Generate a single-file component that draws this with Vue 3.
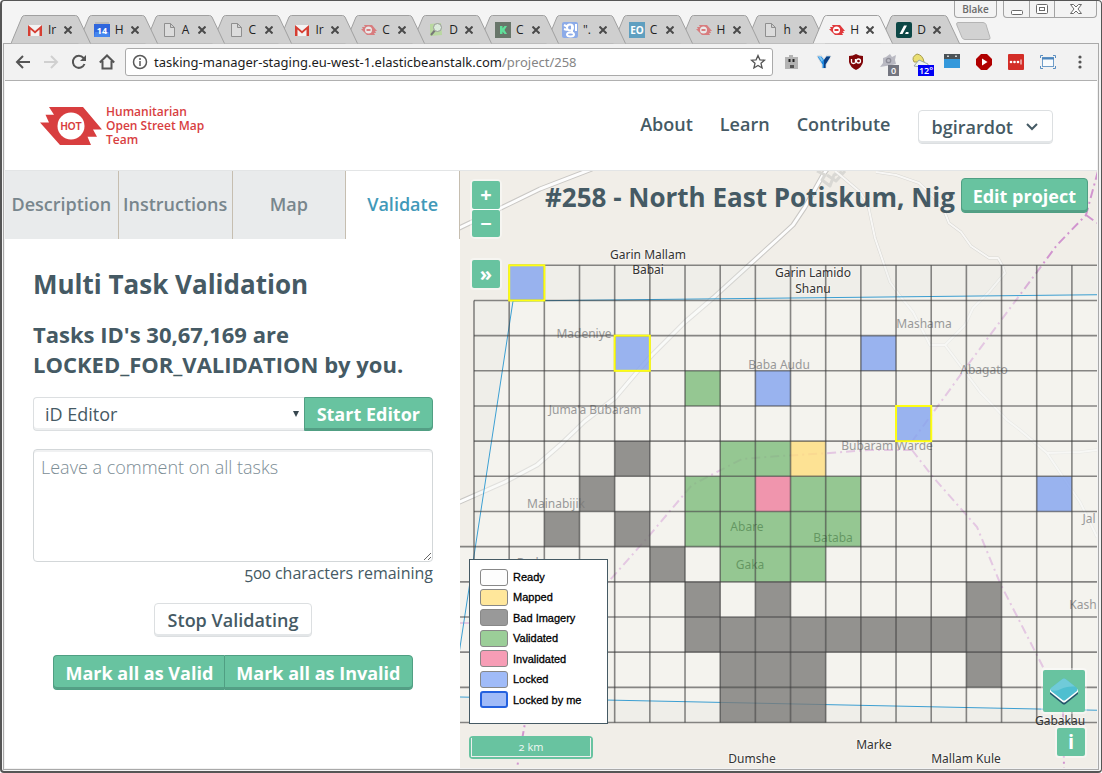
<script setup>
import { ref, computed } from 'vue'

const browserTabs = [
  { icon: 'gmail', title: 'Ir' },
  { icon: 'calendar', title: 'H' },
  { icon: 'doc', title: 'A' },
  { icon: 'doc', title: 'C' },
  { icon: 'gmail', title: 'Ir' },
  { icon: 'hot', title: 'C', faded: true },
  { icon: 'osm', title: 'D' },
  { icon: 'k', title: 'C' },
  { icon: 'google', title: '".' },
  { icon: 'eo', title: 'C' },
  { icon: 'hot', title: 'H', faded: true },
  { icon: 'doc', title: 'h' },
  { icon: 'hot', title: 'H', active: true },
  { icon: 'slash', title: 'D' }
]

const extensions = ['face', 'vimium', 'ublock', 'cat', 'weather', 'window', 'play', 'lastpass', 'capture']

const sideTabs = ['Description', 'Instructions', 'Map', 'Validate']
const activeTab = ref('Validate')

const comment = ref('')
const remaining = computed(() => 500 - comment.value.length)

const legend = [
  { label: 'Ready', kind: 'ready' },
  { label: 'Mapped', kind: 'mapped' },
  { label: 'Bad Imagery', kind: 'bad' },
  { label: 'Validated', kind: 'validated' },
  { label: 'Invalidated', kind: 'invalidated' },
  { label: 'Locked', kind: 'locked' },
  { label: 'Locked by me', kind: 'mine' }
]

const originX = 474
const originY = 265.3
const step = 35.17
const colX = (c) => originX + c * step
const rowY = (r) => originY + r * step

const cellsByKind = {
  validated: [[6, 3], [7, 5], [8, 5], [6, 6], [7, 6], [9, 6], [10, 6], [6, 7], [7, 7], [8, 7], [9, 7], [10, 7], [7, 8], [8, 8], [9, 8]],
  mapped: [[9, 5]],
  invalidated: [[8, 6]],
  locked: [[11, 2], [8, 3], [16, 6], [1, 0], [4, 2], [12, 4]],
  bad: [
    [4, 5], [3, 6], [2, 7], [4, 7], [5, 8], [6, 9], [8, 9], [14, 9],
    [6, 10], [7, 10], [8, 10], [9, 10], [10, 10], [11, 10], [12, 10], [13, 10], [14, 10],
    [7, 11], [8, 11], [9, 11], [14, 11], [7, 12], [8, 12], [9, 12]
  ]
}
const cells = Object.entries(cellsByKind).flatMap(([kind, list]) => list.map(([c, r]) => ({ kind, c, r })))
const selected = [[1, 0], [4, 2], [12, 4]]

const columns = Array.from({ length: 18 }, (_, i) => i)
const rows = Array.from({ length: 14 }, (_, i) => i)
const rowStart = (r) => (r === 0 ? colX(1) : r < 8 ? colX(0) : 460)

const mainRoads = [
  'M455 230L503 207 540 189 592 169',
  'M455 504L505 482 537 465 560 445 585 421 615 398 637 372 652 355 685 322 713 298 780 237 793 225 805 207 823 175 828 168'
]
const minorRoads = [
  'M835 171l5 4 20 17 8 13 7 33 15 44 10 14 13 16 17 33 15 0 20-20 8-17 16-16 16-19-3-8-4-7-9 0-18-12-10-14-12-9-4-10-12-17-14-13-23-8-20-3',
  'M945 345l15 20 20 27 27 28 13 10 27 23 16 24 17 25 17 35M1047 453l33-1 17-2'
]

const places = [
  { name: 'Madeniye', x: 584, y: 338 },
  { name: 'Baba Audu', x: 779, y: 369 },
  { name: 'Mashama', x: 924, y: 328 },
  { name: 'Abagato', x: 984, y: 374 },
  { name: "Juma'a Bubaram", x: 595, y: 414 },
  { name: 'Bubaram Warde', x: 887, y: 450 },
  { name: 'Mainabijik', x: 556, y: 508 },
  { name: 'Abare', x: 747, y: 531, shaded: true },
  { name: 'Bataba', x: 833, y: 542, shaded: true },
  { name: 'Gaka', x: 750, y: 569, shaded: true },
  { name: 'Bada', x: 531, y: 567 },
  { name: 'Jal', x: 1089, y: 523 },
  { name: 'Kash', x: 1083, y: 609 },
  { name: 'Garin Mallam', x: 648, y: 259, dark: true },
  { name: 'Babai', x: 648, y: 274, dark: true },
  { name: 'Garin Lamido', x: 813, y: 277, dark: true },
  { name: 'Shanu', x: 813, y: 293, dark: true },
  { name: 'Gabakau', x: 1060, y: 725, dark: true },
  { name: 'Marke', x: 874, y: 749, dark: true },
  { name: 'Dumshe', x: 752, y: 763, dark: true },
  { name: 'Mallam Kule', x: 966, y: 763, dark: true }
]
</script>

<template>
  <div class="window">
    <div class="titlebar">
      <div class="tabstrip">
        <div
          v-for="(tab, i) in browserTabs"
          :key="i"
          class="btab"
          :class="{ current: tab.active }"
          :style="{ zIndex: tab.active ? 30 : 20 - i }"
        >
          <svg class="tab-shape" width="80" height="29" viewBox="0 0 80 29">
            <path d="M0 28.500 L11 2 Q12 .5 13.500 .5 H64.500 Q66 .5 67 2 L79.500 28.500" />
          </svg>
          <svg class="favicon" :class="{ faded: tab.faded }" width="16" height="16" viewBox="0 0 16 16">
            <g v-if="tab.icon === 'gmail'">
              <path d="M1 3h14v11H1z" fill="#f3f3f3" />
              <path d="M1 14V3l7 6 7-6v11h-2.500V7.500L8 11.500 3.500 7.500V14z" fill="#d63e32" />
            </g>
            <g v-else-if="tab.icon === 'calendar'">
              <path d="M1 0h14v3H1z" fill="#bcbcbc" />
              <path d="M0 2h16v13H0z" fill="#2f66dd" />
              <path d="M1 10h14l1 5H0z" fill="#4485ee" />
              <text x="8" y="12" text-anchor="middle" class="fav-text" font-size="9">14</text>
            </g>
            <path v-else-if="tab.icon === 'doc'" d="M3.500 1.500h6l4 4v9h-10zM9.500 1.500v4h4" fill="#dcdcdc" stroke="#8f8f8f" />
            <g v-else-if="tab.icon === 'hot'">
              <path d="M3 3h8l5 6h-2l1 2h-2l1 2H6L0 7h2L1 5h3z" fill="#e0393c" />
              <circle cx="7.500" cy="8" r="3.500" fill="#fff" />
              <path d="M5.500 8h4" stroke="#e0393c" stroke-width="2" />
            </g>
            <g v-else-if="tab.icon === 'osm'">
              <path d="M2 2l11-1 1 12-12 1z" fill="#b9d8a0" />
              <path d="M3 13l5-6" stroke="#777" stroke-width="2" />
              <circle cx="9.500" cy="5.500" r="4" fill="#dcebdc" stroke="#999" />
            </g>
            <g v-else-if="tab.icon === 'k'">
              <path d="M0 0h16v16H0z" fill="#68766a" />
              <path d="M5 4v8h2.500V9.500L9.500 12H12L9.500 8 12 4H9.500L7.500 6.500V4z" fill="#5fe09a" />
            </g>
            <g v-else-if="tab.icon === 'google'">
              <rect width="16" height="16" rx="2" fill="#8cabe8" />
              <circle cx="8" cy="5.500" r="3" fill="none" stroke="#fff" stroke-width="2" />
              <ellipse cx="8.500" cy="12.500" rx="3.500" ry="2" fill="none" stroke="#fff" stroke-width="2" />
              <path d="M10 3v7M14 2v7M2 3l4 2M2 7l3 1" stroke="#fff" stroke-width="2" />
            </g>
            <g v-else-if="tab.icon === 'eo'">
              <path d="M0 0h16v16H0z" fill="#5f9fc0" />
              <text x="8" y="12" text-anchor="middle" class="fav-text" font-size="10">EO</text>
            </g>
            <g v-else>
              <rect width="16" height="16" rx="2" fill="#0c4746" />
              <path d="M8 3.500h3L6.500 12h-3zM10 10h2.500v2H9z" fill="#fff" />
            </g>
          </svg>
          <span class="tab-title">{{ tab.title }}</span>
          <svg class="tab-close" width="8" height="8" viewBox="0 0 8 8"><path d="M.5 .5l7 7M7.500 .5l-7 7" /></svg>
        </div>
      </div>
      <svg class="new-tab" width="35" height="18" viewBox="0 0 35 18">
        <path d="M2 .5h25q2 0 3 2l4 13q.5 2-2 2H9q-2 0-3-2L.8 3Q0 .5 2 .5z" fill="#d2d2d2" stroke="#b4b4b4" />
      </svg>
      <div class="win-controls">
        <button class="profile" type="button">Blake</button>
        <div class="win-buttons">
          <button type="button" aria-label="Minimize">
            <svg width="14" height="14" viewBox="0 0 14 14"><rect x="1.500" y="8.500" width="11" height="4" rx="1" /></svg>
          </button>
          <button type="button" aria-label="Maximize">
            <svg width="14" height="14" viewBox="0 0 14 14"><rect x="1.500" y="2.500" width="11" height="9" rx="1" /><rect x="4.500" y="5.500" width="5" height="3" /></svg>
          </button>
          <button type="button" class="close" aria-label="Close">
            <svg width="14" height="14" viewBox="0 0 14 14"><path d="M1.500 2.500h3L7 5l2.500-2.500h3L9 7l3.500 4.500h-3L7 9l-2.500 2.500h-3L5 7z" /></svg>
          </button>
        </div>
      </div>
    </div>

    <div class="client">
      <div class="toolbar">
        <div class="nav-buttons">
          <button type="button" aria-label="Back"><svg width="16" height="16" viewBox="0 0 16 16"><path d="M15 8H2M8 2L2 8l6 6" /></svg></button>
          <button type="button" aria-label="Forward" class="off"><svg width="16" height="16" viewBox="0 0 16 16"><path d="M1 8h13M8 2l6 6-6 6" /></svg></button>
          <button type="button" aria-label="Reload"><svg width="16" height="16" viewBox="0 0 16 16"><path d="M13.500 10A6 6 0 1 1 12.500 4L14 5.500" /><path d="M15 1v6H9z" class="solid" /></svg></button>
          <button type="button" aria-label="Home"><svg width="16" height="16" viewBox="0 0 16 16"><path d="M.8 8.500L8 1.500l7.200 7M3.500 7v7.500h9V7" /></svg></button>
        </div>
        <div class="address">
          <svg width="16" height="16" viewBox="0 0 16 16" class="info-icon"><circle cx="8" cy="8" r="6.500" /><path d="M8 7v5M8 4v2" /></svg>
          <div class="url">tasking-manager-staging.eu-west-1.elasticbeanstalk.com<span>/project/258</span></div>
          <svg width="16" height="16" viewBox="0 0 16 16" class="star"><path d="M8 1.500l1.900 4.300 4.600.4-3.500 3.100 1.100 4.700L8 11.500 3.900 14 5 9.300 1.500 6.200l4.600-.4z" /></svg>
        </div>
        <div class="extensions">
          <svg v-for="name in extensions" :key="name" width="16" height="16" viewBox="0 0 16 16">
            <g v-if="name === 'face'">
              <path d="M1 3h4V1h4v2h5v12H1z" fill="#b3b3b3" />
              <path d="M5.500 5v3M9.500 5v3" stroke="#222" stroke-width="2" />
              <path d="M6 11h4v3H6z" fill="#555" />
            </g>
            <g v-else-if="name === 'vimium'">
              <path d="M1 2l4-1 3 4 3-4 4 1-5 9v3H6v-3z" fill="#fff" stroke="#ddd" />
              <path d="M1.500 2.500l4 0L8 6l2.500-3.500 4 0-5 8v3.500h-3v-3.500z" fill="#1c86dc" />
              <path d="M8 6l2.500-3.500 4 0-5 8v3.500H8z" fill="#0d3f82" />
              <path d="M2.500 3h2.500l2 3-1 2z" fill="#7cc6f5" />
            </g>
            <g v-else-if="name === 'ublock'">
              <path d="M8 0q3 2 7 2v6q-1 5-7 8-6-3-7-8V2q4 0 7-2z" fill="#800609" />
              <path d="M3.500 5v3q0 1.500 2 1.500t2-1.500V5" fill="none" stroke="#fff" stroke-width="1.300" />
              <circle cx="10.500" cy="7" r="2" fill="none" stroke="#fff" stroke-width="1.300" />
            </g>
            <g v-else-if="name === 'cat'">
              <path d="M3 4l3-1 4-3 2 3 4-2-1 5 1 4-4 1-12 2 3-4z" fill="#b9b9c2" />
              <circle cx="8.500" cy="6.500" r="2.200" fill="none" stroke="#8d8d98" stroke-width="1.300" />
              <path d="M8 11h11v11H8z" fill="#73757f" />
              <text x="13.500" y="20" text-anchor="middle" class="badge-text" font-size="9">0</text>
            </g>
            <g v-else-if="name === 'weather'">
              <path d="M5 0q6 1 7 8H2Q-1 3 5 0z" fill="#eadf73" stroke="#a79d4f" />
              <path d="M2 12l5-6 9 4v4z" fill="#eef3ee" stroke="#9aa" />
              <path d="M6 11h16v11H6z" fill="#0000f5" />
              <text x="14" y="20" text-anchor="middle" class="badge-text" font-size="9">12°</text>
            </g>
            <g v-else-if="name === 'window'">
              <path d="M0 0h16v5H0z" fill="#4b5256" />
              <path d="M0 5h16v9H0z" fill="#3498db" />
              <path d="M4 1.500v1.500M12 1.500v1.500" stroke="#fff" stroke-width="1.500" />
            </g>
            <g v-else-if="name === 'play'">
              <path d="M5 0h6l5 5v6l-5 5H5l-5-5V5z" fill="#b00000" />
              <path d="M6 4.500v7L11.500 8z" fill="#fff" />
            </g>
            <g v-else-if="name === 'lastpass'">
              <rect width="16" height="16" rx="1" fill="#d32d27" />
              <circle cx="3" cy="8" r="1.300" fill="#fff" /><circle cx="6.500" cy="8" r="1.300" fill="#fff" /><circle cx="10" cy="8" r="1.300" fill="#fff" />
              <path d="M13 5.500v5" stroke="#fff" />
            </g>
            <g v-else>
              <rect x="2.500" y="3.500" width="11" height="9" fill="#f8fbfd" stroke="#6f9dc9" />
              <path d="M2 4.500h12" stroke="#4c86bd" stroke-width="2" />
              <path d="M.5 4V1.500H3M13 1.500h2.500V4M15.500 12v2.500H13M3 14.500H.5V12" fill="none" stroke="#5b8fc1" />
            </g>
          </svg>
          <button type="button" class="menu" aria-label="Menu">
            <svg width="16" height="16" viewBox="0 0 16 16"><circle cx="8" cy="3" r="1.600" /><circle cx="8" cy="8" r="1.600" /><circle cx="8" cy="13" r="1.600" /></svg>
          </button>
        </div>
      </div>

      <header class="page-header">
        <a href="#" class="logo">
          <svg width="62" height="38" viewBox="0 0 62 38">
            <path d="M9 0h34l19 22.500h-9l4 7.300h-9.500l3.500 8.200H20L0 15.500h9L5.500 7.700H14z" fill="#d83e3f" />
            <circle cx="31" cy="19" r="13.500" fill="#fff" />
            <text x="31" y="23" text-anchor="middle" class="logo-hot">HOT</text>
          </svg>
          <span>Humanitarian<br />Open Street Map<br />Team</span>
        </a>
        <nav>
          <a href="#">About</a>
          <a href="#">Learn</a>
          <a href="#">Contribute</a>
          <button type="button" class="btn light user">
            bgirardot
            <svg width="14" height="10" viewBox="0 0 14 10"><path d="M2 2l5 5 5-5" /></svg>
          </button>
        </nav>
      </header>

      <main>
        <section class="side">
          <div class="side-tabs">
            <button
              v-for="t in sideTabs"
              :key="t"
              type="button"
              :class="{ on: t === activeTab }"
              @click="activeTab = t"
            >{{ t }}</button>
          </div>
          <div class="panel">
            <h1>Multi Task Validation</h1>
            <h2>Tasks ID's 30,67,169 are LOCKED_FOR_VALIDATION by you.</h2>
            <div class="editor-row">
              <div class="select-wrap">
                <select aria-label="Editor"><option>iD Editor</option><option>JOSM</option></select>
                <svg width="6" height="6" viewBox="0 0 6 6"><path d="M0 0h6L3 6z" /></svg>
              </div>
              <button type="button" class="btn green start">Start Editor</button>
            </div>
            <textarea v-model="comment" aria-label="Comment" placeholder="Leave a comment on all tasks"></textarea>
            <p class="remaining">{{ remaining }} characters remaining</p>
            <div class="actions"><button type="button" class="btn light">Stop Validating</button></div>
            <div class="actions pair">
              <button type="button" class="btn green">Mark all as Valid</button>
              <button type="button" class="btn green">Mark all as Invalid</button>
            </div>
          </div>
        </section>

        <section class="map">
          <svg class="canvas" width="100%" height="100%">
            <g transform="translate(-460 -171)">
              <g class="roads">
                <path v-for="d in mainRoads" :key="'c' + d" :d="d" class="casing" />
                <path v-for="d in mainRoads" :key="'s' + d" :d="d" class="surface" />
                <path v-for="d in minorRoads" :key="'mc' + d" :d="d" class="minor-casing" />
                <path d="M817 171l8 4-3 5 8 6 4-11 8-3M845 171l-9 10-9-6" class="minor-casing" />
                <path v-for="d in minorRoads" :key="'m' + d" :d="d" class="minor" />
              </g>
              <g class="boundary">
                <path d="M1098 171L1086 215 1057 245 1037 272 970 362 913 440" />
                <path d="M1086 215L1097 223" />
                <path d="M912 450L933 477 977 527 1000 583 1042 665 1063 710 1064 768" />
                <path d="M912 450L870 450 830 453 780 456 742 459 692 485 648 537 610 580 550 640 525 723 517 768M460 623h12" />
              </g>
              <path :d="`M${colX(1)} ${rowY(0)}H2000V${rowY(13)}H460V${rowY(8)}H474V${rowY(1)}H${colX(1)}z`" class="veil" />
              <path :d="`M513 301L2000 288V729L460 697V${rowY(8)}H474z`" class="veil bright" />
              <g class="places">
                <text v-for="p in places" :key="p.name" :x="p.x" :y="p.y" :class="{ dark: p.dark, shaded: p.shaded }">{{ p.name }}</text>
              </g>
              <g class="aoi">
                <path d="M455 680L513 301 2000 285M460 697L2000 729" />
              </g>
              <rect
                v-for="(cell, i) in cells"
                :key="i"
                :x="colX(cell.c)"
                :y="rowY(cell.r)"
                :width="step"
                :height="step"
                class="cell"
                :class="cell.kind"
              />
              <g class="grid">
                <path v-for="c in columns" :key="'c' + c" :d="`M${colX(c)} ${rowY(c === 0 ? 1 : 0)}V${rowY(13)}`" />
                <path v-for="r in rows" :key="'r' + r" :d="`M${rowStart(r)} ${rowY(r)}H2000`" />
              </g>
              <rect
                v-for="([c, r], i) in selected"
                :key="'s' + i"
                :x="colX(c)"
                :y="rowY(r)"
                :width="step"
                :height="step"
                class="selected"
              />
            </g>
          </svg>

          <h2 class="map-title">#258 - North East Potiskum, Nig</h2>
          <button type="button" class="btn green edit">Edit project</button>

          <div class="zoom">
            <button type="button" aria-label="Zoom in">+</button>
            <button type="button" aria-label="Zoom out">−</button>
          </div>
          <button type="button" class="ctl expand" aria-label="Expand">»</button>

          <ul class="legend">
            <li v-for="item in legend" :key="item.label"><i :class="item.kind"></i>{{ item.label }}</li>
          </ul>
          <div class="scale"><div>2 km</div></div>

          <button type="button" class="ctl layers" aria-label="Layers">
            <svg width="30" height="30" viewBox="0 0 30 30">
              <path d="M1 15v3l12.500 10q1.500 1 3 0L29 18v-3z" fill="#23566b" />
              <path d="M1 13v3l12.500 10q1.500 1 3 0L29 16v-3z" fill="#fff" />
              <path d="M2 12L13.500 3q1.500-1 3 0L28 12q1.500 1.500 0 3L16.500 24q-1.500 1-3 0L2 15q-1.500-1.500 0-3z" fill="#4fbfd0" />
              <path d="M1.500 14Q1 13 2 12L13.500 3q1.500-1 3 0L26 10.500Q17 10 12 13T1.500 14z" fill="#70cbd9" />
            </svg>
          </button>
          <button type="button" class="ctl about" aria-label="Attributions">i</button>
        </section>
      </main>
    </div>
  </div>
</template>

<style>
body {
  margin: 0;
  background: #fff;
}
</style>

<style scoped>
* {
  box-sizing: border-box;
}
.window {
  display: flex;
  flex-direction: column;
  height: 100vh;
  border: 1px solid #555;
  border-width: 1px 1px 2px 2px;
  border-radius: 4px;
  background: #f4f4f4;
  font-family: "Open Sans", "Noto Sans", sans-serif;
  color: #455a64;
  overflow: hidden;
}
button {
  font: inherit;
  color: inherit;
  margin: 0;
  padding: 0;
  border: 0;
  background: none;
}
a {
  color: inherit;
  text-decoration: none;
}
svg {
  display: block;
  flex: none;
}

.titlebar {
  position: relative;
  flex: none;
  height: 42px;
  display: flex;
  align-items: flex-start;
  padding: 14px 0 0 9px;
}
.tabstrip {
  flex: 0 1 936px;
  display: flex;
}
.btab {
  position: relative;
  flex: 1;
  height: 29px;
  display: flex;
  align-items: center;
  padding-left: 16px;
}
.tab-shape {
  position: absolute;
  left: 0;
  top: 0;
}
.tab-shape path {
  fill: #cfcfcf;
  stroke: #a0a0a0;
}
.current .tab-shape path {
  fill: #f2f2f2;
}
.favicon {
  position: relative;
}
.favicon.faded {
  opacity: 0.55;
}
.fav-text {
  font-family: "Open Sans", sans-serif;
  font-weight: 700;
  fill: #fff;
}
.tab-title {
  position: relative;
  width: 9px;
  margin-left: 5px;
  white-space: nowrap;
  font-size: 12px;
  line-height: 16px;
  color: #222;
}
.tab-close {
  position: relative;
  margin-left: 7px;
}
.tab-close path {
  fill: none;
  stroke: #4a4a4a;
  stroke-width: 2;
}
.new-tab {
  margin: 7px 0 0 9px;
}
.win-controls {
  position: absolute;
  top: 0;
  right: 4px;
  display: flex;
  gap: 6px;
  z-index: 40;
}
.profile,
.win-buttons {
  height: 17px;
  border: 1px solid #a3a3a3;
  border-top: 0;
  border-radius: 0 0 4px 4px;
  background: #f3f3f3;
}
.profile {
  width: 43px;
  font-size: 10px;
  font-weight: 600;
  line-height: 16px;
  color: #6a6a6a;
}
.win-buttons {
  display: flex;
}
.win-buttons button {
  width: 25px;
  display: flex;
  justify-content: center;
  align-items: center;
}
.win-buttons button + button {
  border-left: 1px solid #a3a3a3;
}
.win-buttons .close {
  width: 42px;
}
.win-buttons rect,
.win-buttons path {
  fill: #fff;
  stroke: #6a6a6a;
}

.client {
  flex: 1;
  min-height: 0;
  display: flex;
  flex-direction: column;
  margin: 0 2px 1px 1px;
  padding: 0 1px 1px;
  border: 1px solid #a9a9a9;
  background: #f2f2f2;
}
.toolbar {
  flex: none;
  height: 37px;
  display: flex;
  align-items: center;
  padding: 0 9px 0 10px;
  border-bottom: 1px solid #b0b0b0;
}
.nav-buttons {
  display: flex;
  gap: 12px;
}
.nav-buttons path {
  fill: none;
  stroke: #555;
  stroke-width: 2;
}
.nav-buttons .solid {
  fill: #555;
  stroke: none;
}
.nav-buttons .off path {
  stroke: #d0d0d0;
}
.address {
  flex: 1;
  height: 28px;
  margin-left: 10px;
  padding: 0 6px;
  display: flex;
  align-items: center;
  border: 1px solid #aaa;
  border-radius: 3px;
  background: #fff;
}
.info-icon {
  fill: none;
  stroke: #5a5a5a;
  stroke-width: 1.500;
}
.url {
  flex: 1;
  margin-left: 6px;
  font-family: "Noto Sans", sans-serif;
  font-size: 13px;
  line-height: 20px;
  color: #1c1c1c;
  white-space: nowrap;
}
.url span {
  color: #858585;
}
.star {
  fill: none;
  stroke: #555;
  stroke-width: 1.300;
}
.extensions {
  display: flex;
  gap: 16px;
  margin-left: 11px;
}
.extensions svg {
  overflow: visible;
}
.badge-text {
  font-family: "Open Sans", sans-serif;
  font-weight: 600;
  fill: #fff;
}
.menu svg {
  fill: #555;
}

.page-header {
  flex: none;
  height: 90px;
  display: flex;
  align-items: center;
  justify-content: space-between;
  padding: 0 44px 0 35px;
  border-bottom: 1px solid #e3e5e6;
  background: #fff;
}
.logo {
  display: flex;
  align-items: center;
  gap: 4px;
  font-size: 12px;
  font-weight: 600;
  line-height: 14px;
  color: #d83e3f;
}
.logo-hot {
  font-family: "Liberation Sans Narrow", "Liberation Sans", sans-serif;
  font-size: 10px;
  font-weight: 700;
  fill: #d83e3f;
}
nav {
  display: flex;
  align-items: center;
  gap: 27px;
  padding-top: 2px;
  font-size: 18px;
  font-weight: 600;
  line-height: 24px;
}
nav a {
  padding-bottom: 6px;
}
.btn {
  height: 34px;
  padding: 0 12px;
  border: 1px solid #dcdfe1;
  border-radius: 4px;
  font-size: 18px;
  font-weight: 600;
  line-height: 30px;
  white-space: nowrap;
}
.light {
  padding: 0 13px;
  background: #fff;
  box-shadow: inset 0 -2px 0 #e3e6e8;
}
.green {
  background: #68c3a0;
  border-color: #509f83;
  box-shadow: inset 0 -2px 0 #549f85;
  color: #fff;
  font-weight: 700;
}
.user {
  display: flex;
  align-items: center;
  gap: 12px;
}
.user svg path {
  fill: none;
  stroke: #455a64;
  stroke-width: 2;
}

main {
  flex: 1;
  min-height: 0;
  display: flex;
  background: #fff;
}
.side {
  flex: 5 1 0;
  min-width: 0;
}
.side-tabs {
  display: grid;
  grid-template-columns: repeat(4, 1fr);
}
.side-tabs button {
  height: 68px;
  padding-bottom: 2px;
  border-right: 1px solid #c6beb0;
  background: #e9ebec;
  color: #78868d;
  font-size: 18px;
  font-weight: 600;
  white-space: nowrap;
}
.side-tabs .on {
  background: #fff;
  color: #4199b9;
}
.panel {
  padding: 27px 27px 0 28px;
}
h1 {
  margin: 0;
  font-size: 26px;
  font-weight: 700;
  line-height: 36px;
}
.panel h2 {
  margin: 17px 0 0;
  font-size: 22px;
  font-weight: 700;
  line-height: 30px;
}
.editor-row {
  display: flex;
  margin-top: 18px;
}
.select-wrap {
  position: relative;
  flex: 1;
}
.select-wrap svg {
  position: absolute;
  right: 5px;
  top: 14px;
  fill: #37474f;
}
select {
  appearance: none;
  width: 100%;
  height: 34px;
  padding: 0 11px;
  border: 1px solid #dcdfe1;
  border-right: 0;
  border-radius: 4px 0 0 4px;
  background: #fff;
  box-shadow: inset 0 -2px 0 #edeff0;
  font: 400 18px/30px "Open Sans", sans-serif;
  color: #455a64;
}
.start {
  border-radius: 0 4px 4px 0;
}
textarea {
  display: block;
  width: 100%;
  height: 113px;
  margin-top: 18px;
  padding: 5px 7px;
  border: 1px solid #d3d7d9;
  border-radius: 4px;
  background: #fff;
  box-shadow: inset 0 2px 0 #f0f1f2;
  font: 300 18px/25px "Open Sans", sans-serif;
  color: #455a64;
}
textarea::placeholder {
  color: #7c8d95;
}
.remaining {
  margin: 0;
  text-align: right;
  font-size: 16px;
  line-height: 23px;
  font-variant-numeric: oldstyle-nums;
}
.actions {
  display: flex;
  justify-content: center;
  margin-top: 18px;
}
.pair .btn {
  height: 35px;
  padding: 0 11px;
}
.pair .btn:first-child {
  border-radius: 4px 0 0 4px;
  border-right: 0;
}
.pair .btn:last-child {
  border-radius: 0 4px 4px 0;
}

.map {
  position: relative;
  flex: 7 1 0;
  min-width: 0;
  overflow: hidden;
  background: #f1eee8;
}
.canvas {
  position: absolute;
  inset: 0;
}
.roads path {
  fill: none;
  stroke-linejoin: round;
}
.roads .casing {
  stroke: #c9c7c4;
  stroke-width: 5;
}
.roads .surface {
  stroke: #fdfdfd;
  stroke-width: 3;
}
.roads .minor-casing {
  stroke: #d9d8d4;
  stroke-width: 3;
}
.roads .minor {
  stroke: #f8f7f5;
  stroke-width: 2;
}
.boundary path {
  fill: none;
  stroke: #d195cf;
  stroke-width: 2;
  stroke-dasharray: 9 4 2 4;
}
.veil {
  fill: #eaeeeb;
  opacity: 0.3;
}
.veil.bright {
  fill: #fffefd;
}
.aoi path {
  fill: none;
  stroke: #3c9fd2;
}
.places text {
  font-family: "Noto Sans", sans-serif;
  font-size: 12px;
  text-anchor: middle;
  fill: #999;
}
.places .dark {
  fill: #333;
  stroke: #f6f4f0;
  stroke-width: 2;
  paint-order: stroke;
}
.places .shaded {
  fill: #333;
}
.cell.validated {
  fill: rgba(118, 184, 115, 0.75);
}
.cell.mapped {
  fill: rgba(255, 221, 125, 0.8);
}
.cell.invalidated {
  fill: rgba(239, 125, 156, 0.8);
}
.cell.locked {
  fill: rgba(130, 163, 239, 0.8);
}
.cell.bad {
  fill: rgba(122, 121, 119, 0.8);
}
.grid path {
  stroke: rgba(60, 60, 60, 0.6);
  stroke-width: 1.600;
}
.selected {
  fill: none;
  stroke: #ff1;
  stroke-width: 2;
}

.map-title {
  position: absolute;
  top: 8px;
  left: 85px;
  right: 136px;
  margin: 0;
  font-size: 26px;
  font-weight: 700;
  line-height: 36px;
  white-space: nowrap;
}
.edit {
  position: absolute;
  top: 7px;
  right: 9px;
  height: 35px;
  padding: 0 11px;
}
.zoom {
  position: absolute;
  left: 12px;
  top: 10px;
  display: grid;
  gap: 1px;
  border-radius: 3px;
  background: #fff;
  box-shadow: 0 0 0 2px rgba(255, 255, 255, 0.4);
}
.zoom button,
.ctl {
  width: 28px;
  height: 28px;
  border-radius: 2px;
  background: #68c3a0;
  color: #fff;
  font-size: 20px;
  font-weight: 700;
  line-height: 28px;
}
.ctl {
  position: absolute;
  box-shadow: 0 0 0 2px rgba(255, 255, 255, 0.4);
}
.zoom button:last-child {
  height: 27px;
}
.expand {
  left: 12px;
  top: 89px;
}
.legend {
  position: absolute;
  left: 9px;
  bottom: 44px;
  width: 139px;
  margin: 0;
  padding: 7px 0 13px 10px;
  border: 1px solid #455a64;
  background: #fff;
  list-style: none;
  font-family: "Liberation Sans", sans-serif;
  font-size: 11px;
  line-height: 20px;
  color: #000;
  -webkit-text-stroke: 0.3px #000;
}
.legend li {
  display: flex;
  align-items: center;
  gap: 5px;
  height: 20px;
}
.legend li:nth-child(odd):not(:first-child) {
  height: 21px;
}
.legend i {
  width: 28px;
  height: 17px;
  border: 1px solid #888;
  border-radius: 3px;
}
.legend .ready {
  background: #fdfdfd;
}
.legend .mapped {
  background: #ffe79b;
}
.legend .bad {
  background: #999;
}
.legend .validated {
  background: #9bce98;
}
.legend .invalidated {
  background: #f79db6;
}
.legend .locked {
  background: #a0bbf8;
}
.legend .mine {
  background: #a0bbf8;
  border: 2px solid #2461df;
}
.scale {
  position: absolute;
  left: 9px;
  bottom: 9px;
  width: 124px;
  padding: 2px;
  border-radius: 4px;
  background: #68c3a0;
}
.scale div {
  height: 19px;
  border: 1px solid #eee;
  border-top: 0;
  text-align: center;
  font-size: 11px;
  line-height: 18px;
  font-variant-numeric: oldstyle-nums;
  color: #eef7f3;
}
.layers {
  right: 12px;
  bottom: 56px;
  width: 42px;
  height: 42px;
  display: flex;
  align-items: center;
  justify-content: center;
}
.about {
  right: 12px;
  bottom: 12px;
}
</style>
